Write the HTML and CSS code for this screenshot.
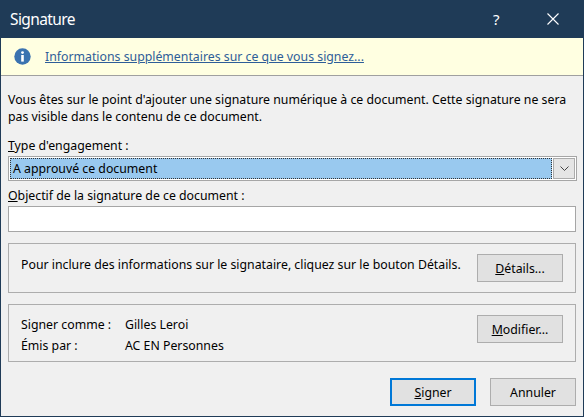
FILE: index.html
```html
<!DOCTYPE html>
<html lang="fr">
<head>
<meta charset="utf-8">
<title>Signature</title>
<link rel="stylesheet" href="styles.css">
</head>
<body>
<div class="window">
  <div class="titlebar">
    <span class="title">Signature</span>
    <span class="help">?</span>
    <span class="close">
      <svg width="12" height="12" viewBox="0 0 12 12"><path d="M0.5 0.5 L11.5 11.5 M11.5 0.5 L0.5 11.5" stroke="#fff" stroke-width="1.1" fill="none"/></svg>
    </span>
  </div>
  <div class="infobar">
    <svg class="info-icon" width="17" height="17" viewBox="0 0 17 17">
      <circle cx="8.5" cy="8.5" r="8.2" fill="#3b73b0"/>
      <circle cx="8.5" cy="4.6" r="1.4" fill="#fff"/>
      <rect x="7.2" y="7" width="2.6" height="6.6" fill="#fff"/>
    </svg>
    <a class="link" href="#">Informations supplémentaires sur ce que vous signez...</a>
  </div>
  <div class="content">
    <p class="intro">Vous êtes sur le point d'ajouter une signature numérique à ce document. Cette signature ne sera pas visible dans le contenu de ce document.</p>
    <div class="label"><u>T</u>ype d'engagement :</div>
    <div class="select">
      <div class="select-value"><span>A approuvé ce document</span></div>
      <div class="select-btn">
        <svg width="9" height="5" viewBox="0 0 9 5"><path d="M0.5 0.5 L4.5 4.5 L8.5 0.5" stroke="#444" stroke-width="1" fill="none"/></svg>
      </div>
    </div>
    <div class="label label2"><u>O</u>bjectif de la signature de ce document :</div>
    <div class="input"></div>
    <div class="group group1">
      <span class="group-text">Pour inclure des informations sur le signataire, cliquez sur le bouton Détails.</span>
      <button class="btn"><u>D</u>étails...</button>
    </div>
    <div class="group group2">
      <div class="signer-grid">
        <span>Signer comme :</span><span>Gilles Leroi</span>
        <span>Émis par :</span><span>AC EN Personnes</span>
      </div>
      <button class="btn"><u>M</u>odifier...</button>
    </div>
    <div class="actions">
      <button class="btn btn-default"><u>S</u>igner</button>
      <button class="btn">Annuler</button>
    </div>
  </div>
</div>
</body>
</html>
```

FILE: styles.css
```css
* { box-sizing: border-box; }
html, body { margin: 0; padding: 0; }
body {
  width: 584px;
  height: 417px;
  font-family: "Noto Sans", "DejaVu Sans", sans-serif;
  font-size: 12.3px;
  color: #000;
  background: #f0f0f0;
}
.window {
  width: 584px;
  height: 417px;
  border: 1px solid #1f3b57;
  border-top: none;
  background: #f0f0f0;
  display: flex;
  flex-direction: column;
}
.titlebar {
  height: 38px;
  background: #1f3b57;
  color: #fff;
  display: flex;
  align-items: center;
  padding-left: 9px;
  flex-shrink: 0;
}
.title { font-size: 15.5px; letter-spacing: -0.6px; flex: 1; }
.help { font-size: 15px; width: 44px; text-align: left; }
.close { width: 46px; display: flex; justify-content: flex-start; padding-left: 10px; }
.close svg { display: block; }
.infobar {
  height: 38px;
  background: #ffffe1;
  border-bottom: 1px solid #a0a0a0;
  display: flex;
  align-items: center;
  padding-left: 13px;
  flex-shrink: 0;
}
.info-icon { margin-right: 14px; display: block; }
.link { color: #2e5d98; text-decoration: underline; }
.content {
  flex: 1;
  padding: 15px 6px 0 7px;
  display: flex;
  flex-direction: column;
}
.intro { margin: 0; line-height: 17px; }
.label { line-height: 17px; margin-top: 12px; }
.label2 { margin-top: 6px; }
.select {
  margin-top: 2px;
  height: 25px;
  border: 1px solid #a6a6a6;
  background: #fff;
  display: flex;
  padding: 1px;
}
.select-value {
  flex: 1;
  background: #99c9ef;
  border: 1px dotted #333;
  display: flex;
  align-items: center;
  padding-left: 2px;
}
.select-btn {
  width: 22px;
  margin-left: 1px;
  background: #e5e5e5;
  border: 1px solid #acacac;
  display: flex;
  align-items: center;
  justify-content: center;
}
.select-btn svg { display: block; }
.input {
  margin-top: 2px;
  height: 26px;
  border: 1px solid #a6a6a6;
  background: #fff;
  margin-right: 1px;
}
.group {
  border: 1px solid #adadad;
  margin-right: 1px;
  display: flex;
  padding: 10px 12px 0 12px;
  justify-content: space-between;
  align-items: flex-start;
}
.group1 { margin-top: 11px; height: 50px; }
.group1 .group-text { line-height: 17px; margin-top: 2px; }
.group2 { margin-top: 11px; height: 58px; }
.signer-grid {
  display: grid;
  grid-template-columns: 104px auto;
  line-height: 21px;
  margin-top: -1px;
}
.btn {
  font-family: inherit;
  font-size: 12.3px;
  color: #000;
  background: #e1e1e1;
  border: 1px solid #adadad;
  width: 86px;
  height: 28px;
  padding: 0;
  margin: 0;
}
.actions {
  margin-top: 16px;
  display: flex;
  justify-content: flex-end;
  gap: 14px;
  padding-right: 1px;
}
.btn-default { border: 2px solid #0078d7; }
```
